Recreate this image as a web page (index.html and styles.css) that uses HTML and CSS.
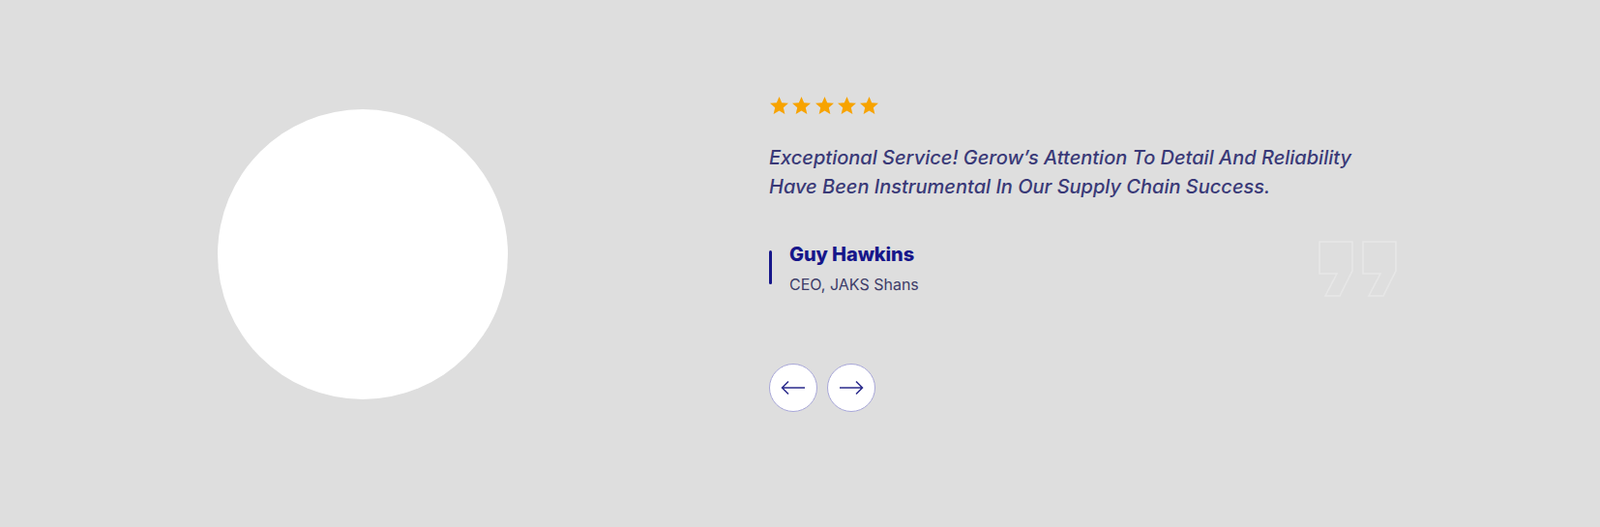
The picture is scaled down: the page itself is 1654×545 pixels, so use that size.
FILE: index.html
```html
<!DOCTYPE html>
<html lang="en">
<head>
<meta charset="utf-8">
<title>Testimonial</title>
<link rel="stylesheet" href="styles.css">
</head>
<body>
<section class="testimonial">
  <div class="photo"></div>
  <div class="content">
    <div class="stars">
      <svg class="star" viewBox="2 2 20 19"><path d="M12 17.27L18.18 21l-1.64-7.03L22 9.24l-7.19-.61L12 2 9.19 8.63 2 9.24l5.46 4.73L5.82 21z"/></svg>
      <svg class="star" viewBox="2 2 20 19"><path d="M12 17.27L18.18 21l-1.64-7.03L22 9.24l-7.19-.61L12 2 9.19 8.63 2 9.24l5.46 4.73L5.82 21z"/></svg>
      <svg class="star" viewBox="2 2 20 19"><path d="M12 17.27L18.18 21l-1.64-7.03L22 9.24l-7.19-.61L12 2 9.19 8.63 2 9.24l5.46 4.73L5.82 21z"/></svg>
      <svg class="star" viewBox="2 2 20 19"><path d="M12 17.27L18.18 21l-1.64-7.03L22 9.24l-7.19-.61L12 2 9.19 8.63 2 9.24l5.46 4.73L5.82 21z"/></svg>
      <svg class="star" viewBox="2 2 20 19"><path d="M12 17.27L18.18 21l-1.64-7.03L22 9.24l-7.19-.61L12 2 9.19 8.63 2 9.24l5.46 4.73L5.82 21z"/></svg>
    </div>
    <p class="quote">Exceptional Service! Gerow’s Attention To Detail And Reliability Have Been Instrumental In Our Supply Chain Success.</p>
    <div class="author-row">
      <div class="author">
        <span class="bar"></span>
        <div class="author-text">
          <h3 class="name">Guy Hawkins</h3>
          <p class="role">CEO, JAKS Shans</p>
        </div>
      </div>
      <svg class="quote-mark" viewBox="0 0 82 58" width="82" height="58">
        <path d="M1 1H35V31L22 57H7L19 34H1Z"/>
        <path d="M46 1H80V31L67 57H52L64 34H46Z"/>
      </svg>
    </div>
    <div class="nav">
      <button class="nav-btn" aria-label="Previous">
        <svg viewBox="0 0 26 16" width="26" height="16"><path d="M25 8H1.5M8 1.5L1.5 8L8 14.5"/></svg>
      </button>
      <button class="nav-btn" aria-label="Next">
        <svg viewBox="0 0 26 16" width="26" height="16"><path d="M1 8H24.5M18 1.5L24.5 8L18 14.5"/></svg>
      </button>
    </div>
  </div>
</section>
</body>
</html>
```

FILE: styles.css
```css
html, body {
  margin: 0;
  padding: 0;
}
body {
  background: #dedede;
  font-family: Inter, "Noto Sans", sans-serif;
}
.testimonial {
  box-sizing: border-box;
  height: 545px;
  display: flex;
  align-items: center;
  padding: 0 0 20px 225px;
}
.photo {
  flex: none;
  width: 300px;
  height: 300px;
  border-radius: 50%;
  background: #ffffff;
  margin: 1px 270px 0 0;
}
.content {
  width: 650px;
}
.stars {
  display: flex;
  gap: 4.3px;
  margin-left: 1px;
}
.star {
  width: 19px;
  height: 18px;
  fill: #f7a300;
}
.quote {
  margin: 30px 0 0;
  font-size: 20px;
  line-height: 30px;
  font-style: italic;
  font-weight: 500;
  color: #393977;
  max-width: 610px;
}
.author-row {
  display: flex;
  justify-content: space-between;
  align-items: center;
  margin-top: 41px;
}
.author {
  display: flex;
  align-items: center;
  gap: 18px;
}
.bar {
  width: 3px;
  height: 35px;
  background: #16168a;
  border-radius: 2px;
  margin-top: -3px;
}
.name {
  margin: 0;
  font-size: 20px;
  line-height: 24px;
  font-weight: 800;
  color: #16168a;
  letter-spacing: -0.1px;
}
.role {
  margin: 9px 0 0;
  font-size: 16px;
  line-height: 20px;
  color: #3c3c68;
}
.quote-mark {
  flex: none;
  fill: none;
  stroke: #e7e7e7;
  stroke-width: 1.6;
}
.nav {
  display: flex;
  gap: 10px;
  margin-top: 69px;
}
.nav-btn {
  width: 50px;
  height: 50px;
  border-radius: 50%;
  border: 1px solid #a8a7d8;
  background: #ffffff;
  padding: 0;
  display: flex;
  align-items: center;
  justify-content: center;
  cursor: pointer;
}
.nav-btn svg {
  fill: none;
  stroke: #2a2a8c;
  stroke-width: 1.5;
}
```
